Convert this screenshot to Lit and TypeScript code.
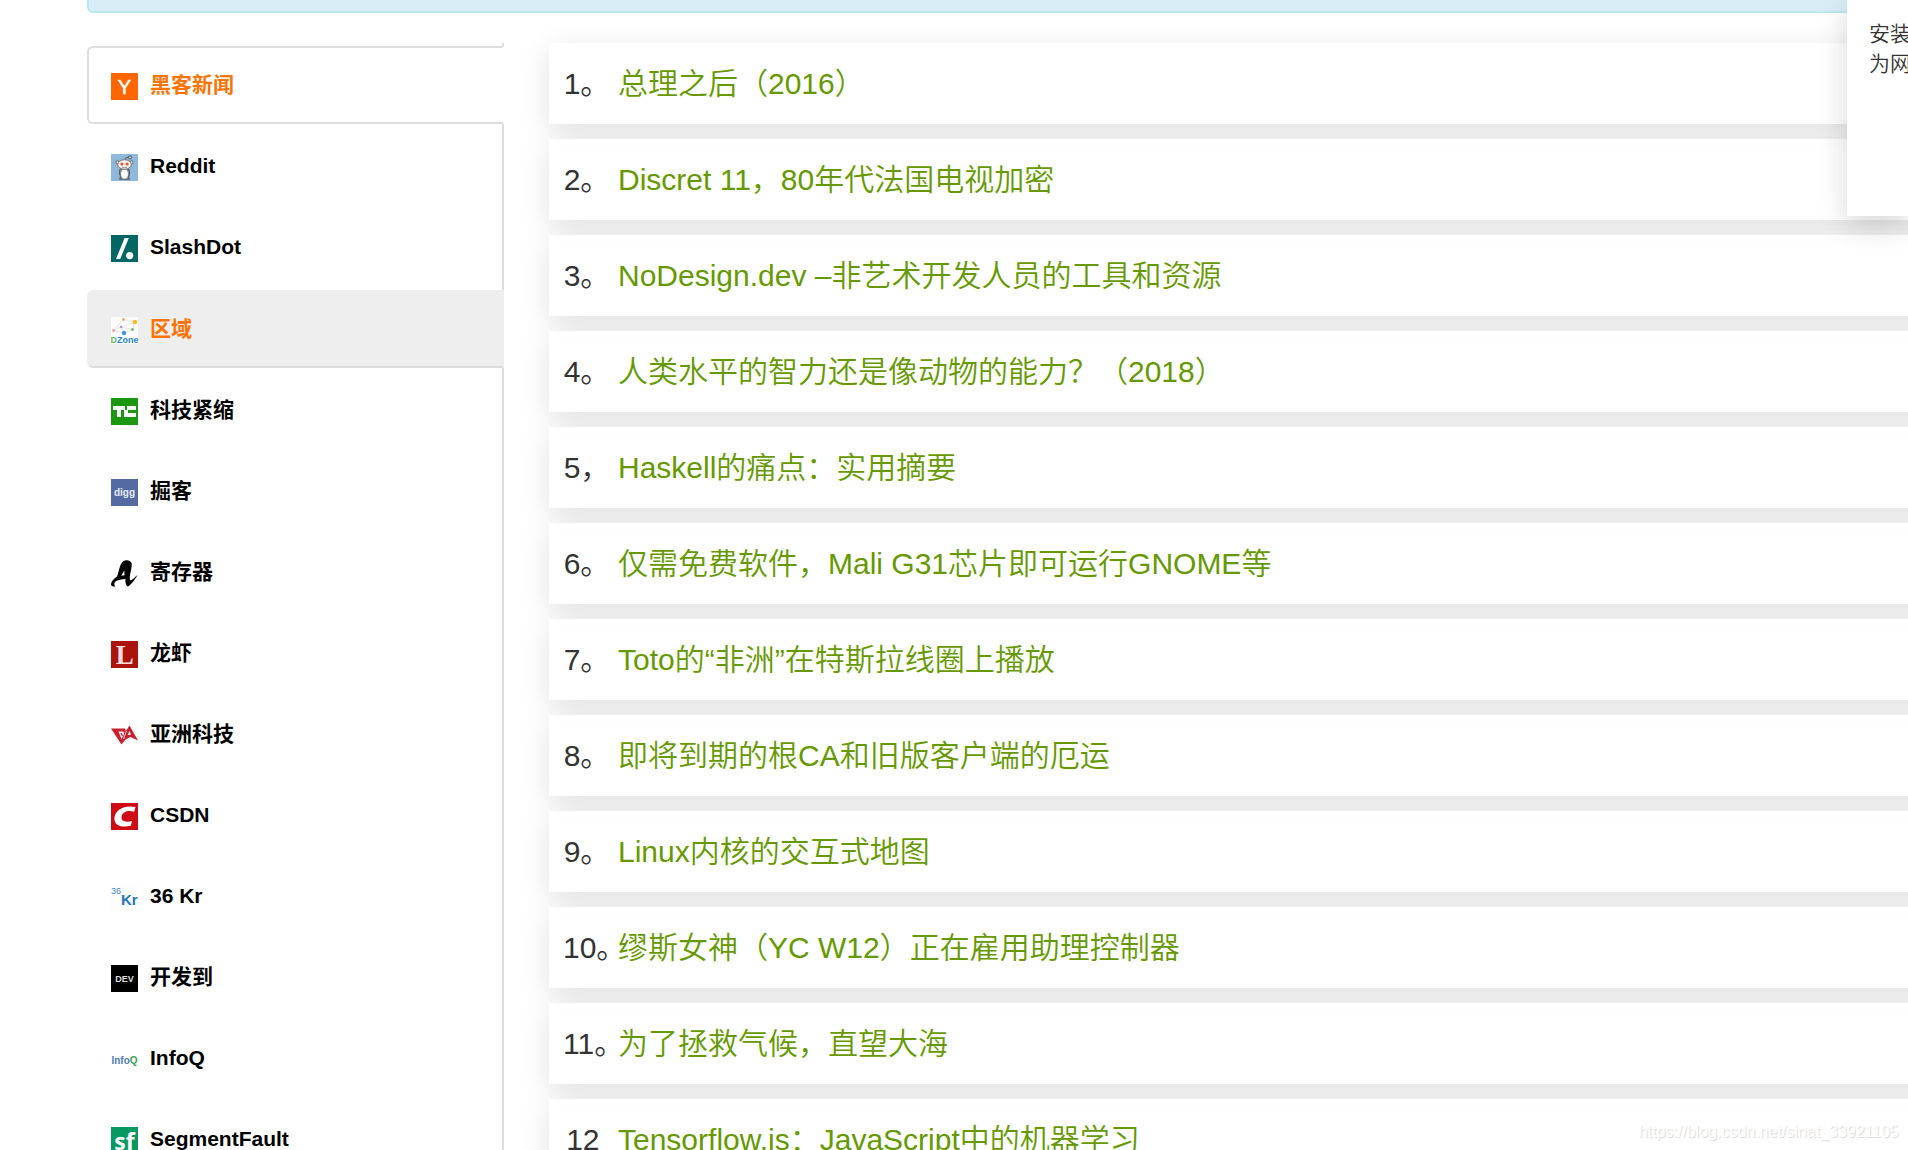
import { LitElement, html, svg, css, type SVGTemplateResult } from "lit";
import { customElement, property, state } from "lit/decorators.js";
import { classMap } from "lit/directives/class-map.js";

interface Source {
  id: string;
  name: string;
}

interface Story {
  marker: string;
  title: string;
}

const SOURCES: Source[] = [
  { id: "hn", name: "黑客新闻" },
  { id: "reddit", name: "Reddit" },
  { id: "slashdot", name: "SlashDot" },
  { id: "dzone", name: "区域" },
  { id: "techcrunch", name: "科技紧缩" },
  { id: "digg", name: "掘客" },
  { id: "alist", name: "寄存器" },
  { id: "lobsters", name: "龙虾" },
  { id: "techasia", name: "亚洲科技" },
  { id: "csdn", name: "CSDN" },
  { id: "kr36", name: "36 Kr" },
  { id: "dev", name: "开发到" },
  { id: "infoq", name: "InfoQ" },
  { id: "segmentfault", name: "SegmentFault" },
];

const STORIES: Story[] = [
  { marker: "1。", title: "总理之后（2016）" },
  { marker: "2。", title: "Discret 11，80年代法国电视加密" },
  { marker: "3。", title: "NoDesign.dev –非艺术开发人员的工具和资源" },
  { marker: "4。", title: "人类水平的智力还是像动物的能力？（2018）" },
  { marker: "5，", title: "Haskell的痛点：实用摘要" },
  { marker: "6。", title: "仅需免费软件，Mali G31芯片即可运行GNOME等" },
  { marker: "7。", title: "Toto的“非洲”在特斯拉线圈上播放" },
  { marker: "8。", title: "即将到期的根CA和旧版客户端的厄运" },
  { marker: "9。", title: "Linux内核的交互式地图" },
  { marker: "10。", title: "缪斯女神（YC W12）正在雇用助理控制器" },
  { marker: "11。", title: "为了拯救气候，直望大海" },
  { marker: "12\u00a0", title: "Tensorflow.js：JavaScript中的机器学习" },
];

const LOGOS: Record<string, SVGTemplateResult> = {
  hn: svg`
    <rect width="27" height="27" fill="#ff6600" />
    <text class="sans" x="13.5" y="21" font-size="20" text-anchor="middle" fill="#fff" stroke="#fff" stroke-width=".5">Y</text>`,
  reddit: svg`
    <rect width="27" height="27" fill="#8fb8dd" />
    <path d="M13.5 7.5 L15 3.5 L18.5 3" fill="none" stroke="#555" stroke-width="1" />
    <circle cx="19" cy="3.4" r="1.6" fill="#b9cbdc" stroke="#555" />
    <path d="M9 15 Q7.5 19 9.5 23 L8.5 25.2 H18.5 L17.5 23 Q19.5 19 18 15 Z" fill="#8a8f95" stroke="#555" />
    <ellipse cx="13.5" cy="20" rx="3.4" ry="4.7" fill="#fff" />
    <circle cx="6.6" cy="8.5" r="1.7" fill="#e9dcd6" stroke="#666" />
    <circle cx="20.4" cy="8.5" r="1.7" fill="#e9dcd6" stroke="#666" />
    <ellipse cx="13.5" cy="10.5" rx="6.8" ry="4.8" fill="#f3efec" stroke="#777" />
    <circle cx="10.8" cy="10" r="1.5" fill="#f0512e" />
    <circle cx="16.2" cy="10" r="1.5" fill="#f0512e" />
    <path d="M11 13.2 Q13.5 14.5 16 13.2" fill="none" stroke="#777" stroke-width=".8" />`,
  slashdot: svg`
    <rect width="27" height="27" fill="#026664" />
    <path d="M13.6 3 H17.8 L9.2 24 H5 Z" fill="#fff" />
    <circle cx="18.7" cy="20.6" r="3.6" fill="#fff" />`,
  dzone: svg`
    <rect width="27" height="27" fill="#fdfdfd" />
    <path d="M2.5 13.5 L12.5 2.5 L24 5 L21.5 12.5 L13 16 L10 10 L24 5 M2.5 13.5 L10 10 L21.5 12.5 M2.5 13.5 L13 16" fill="none" stroke="#ddd" stroke-width=".8" />
    <circle cx="12.5" cy="2.5" r="1.4" fill="#f5a168" />
    <circle cx="24" cy="5" r="2.2" fill="#fbbc1a" />
    <circle cx="2.5" cy="13.5" r="1.3" fill="#ee8592" />
    <circle cx="10" cy="10" r="1.2" fill="#b58acb" />
    <circle cx="21.5" cy="12.5" r="1.4" fill="#6abf58" />
    <circle cx="13" cy="16" r="2.2" fill="#3b95db" />
    <text class="sans bold" x="13.5" y="26" font-size="9" text-anchor="middle" fill="#2483ce"><tspan fill="#63bd52">D</tspan>Zone</text>`,
  techcrunch: svg`
    <rect width="27" height="27" fill="#1c9710" />
    <g fill="#fff">
      <rect x="2" y="8" width="12" height="4" />
      <rect x="6" y="8" width="4" height="11" />
      <rect x="13" y="12" width="4" height="7" />
      <rect x="16" y="8" width="9" height="4" />
      <rect x="13" y="15" width="12" height="4" />
    </g>`,
  digg: svg`
    <rect width="27" height="27" fill="#536ba2" />
    <text class="sans bold" x="13.5" y="17" font-size="10" text-anchor="middle" fill="#e8edf7">digg</text>`,
  alist: svg`
    <path d="M0 25 C0 21 3.5 18.500 6 16.500 C8 12 8.500 4 12 1.500 C14.500 -.5 19 -.5 20.500 3 C21.500 6 19 13 18.800 17 C18.700 19.500 19 20.500 20 20.200 C22 19.500 24.500 16.500 26.500 15 C24 19.500 20.500 24.500 16.800 26.600 C14.500 25 14.200 22 14.500 19 C11 19.500 6.500 19.800 4.500 21.500 C3 23 3 24.500 4.200 26.800 C2 26.500 .5 26 0 25 Z" fill="#050505" />
    <path d="M13.300 10.500 L10.300 15.800 L13.500 15.300 Z" fill="#fff" />`,
  lobsters: svg`
    <rect width="27" height="27" fill="#ac130d" />
    <text class="serif bold" x="13.8" y="23" font-size="27" text-anchor="middle" fill="#f4dfde">L</text>`,
  techasia: svg`
    <path d="M0 6.500 H14 L15 9 L18.500 3.500 L27 18.500 L19.500 15 L14.500 17.500 L10.500 22.500 Z" fill="#c8202f" />
    <path d="M7.500 9.500 H12.500 L13 12 L10.500 17 Z" fill="#fff" />
    <path d="M10 11 L11.500 14" stroke="#c8202f" stroke-width="1.200" />
    <path d="M18.300 9 L20 12.500 L16.800 13.200 Z" fill="#fff" />
    <path d="M15.500 9 L12.500 17" stroke="#fff" stroke-width=".8" />`,
  csdn: svg`
    <rect width="27" height="27" fill="#ce0a15" />
    <path d="M24.5 4 L23.2 8.8 C17 7 11.5 8.5 10.5 14 C10 18.5 15 19.5 21 18 L19.8 22.8 C10 25 2.5 22.5 3.5 14.5 C4.5 6 14 1.8 24.5 4 Z" fill="#fff" />`,
  kr36: svg`
    <rect width="27" height="27" fill="#fcfdfc" />
    <text class="sans" x="0" y="10" font-size="9" fill="#4289c8">36</text>
    <text class="sans bold" x="10" y="21" font-size="15" fill="#2577bd">Kr</text>`,
  dev: svg`
    <rect width="27" height="27" fill="#000" />
    <text class="sans bold" x="13.5" y="17" font-size="9" text-anchor="middle" fill="#ddd">DEV</text>`,
  infoq: svg`
    <text class="sans bold" x="13.5" y="18" font-size="10" text-anchor="middle" fill="#4d7dbd">Info<tspan fill="#3f9c52">Q</tspan></text>`,
  segmentfault: svg`
    <rect width="27" height="27" fill="#089963" />
    <text class="open bold" x="13.5" y="23" font-size="23" text-anchor="middle" fill="#fff">sf</text>`,
};

@customElement("source-logo")
class SourceLogo extends LitElement {
  @property() name = "";

  static styles = css`
    :host {
      display: block;
      width: 27px;
      height: 27px;
      flex: none;
    }
    .logo {
      display: block;
      width: 100%;
      height: 100%;
    }
    .sans { font-family: "Liberation Sans", Arial, sans-serif; }
    .serif { font-family: "Liberation Serif", Georgia, serif; }
    .open { font-family: "Open Sans", sans-serif; }
    .sans,
    .serif,
    .open { font-weight: 400; }
    .bold { font-weight: 700; }
  `;

  render() {
    return html`<svg class="logo" viewBox="0 0 27 27" aria-hidden="true">${LOGOS[this.name]}</svg>`;
  }
}

@customElement("source-tabs")
class SourceTabs extends LitElement {
  @property() active = "hn";
  @property() highlighted = "dzone";

  static styles = css`
    :host {
      display: block;
    }
    .tabs {
      display: flex;
      flex-direction: column;
      gap: 3px;
      height: 100%;
      box-sizing: border-box;
      padding-top: 3px;
      border-right: 2px solid #ddd;
    }
    .tab {
      display: flex;
      align-items: flex-end;
      gap: 12px;
      margin-right: -2px;
      padding: 22px;
      border: 2px solid transparent;
      border-radius: 6px 0 0 6px;
      color: #000;
      font-size: 21px;
      font-weight: 700;
      line-height: 30px;
      text-decoration: none;
      white-space: nowrap;
    }
    .active {
      background: #fff;
      border-color: #ddd #fff #ddd #ddd;
      color: #ff7300;
    }
    .highlighted,
    .tab:not(.active):hover {
      background: #eee;
      border-color: #eee #eee #ddd #eee;
      color: #ff7300;
    }
    .highlighted {
      margin-top: 1px;
    }
  `;

  private pick(event: Event, id: string) {
    event.preventDefault();
    this.dispatchEvent(new CustomEvent("source-change", { detail: id }));
  }

  render() {
    return html`
      <nav class="tabs">
        ${SOURCES.map(
          (source) => html`
            <a
              class=${classMap({
                tab: true,
                active: source.id === this.active,
                highlighted: source.id === this.highlighted && source.id !== this.active,
              })}
              href="#${source.id}"
              @click=${(event: Event) => this.pick(event, source.id)}
            >
              <source-logo name=${source.id}></source-logo>
              <span>${source.name}</span>
            </a>
          `,
        )}
      </nav>
    `;
  }
}

@customElement("story-list")
class StoryList extends LitElement {
  static styles = css`
    :host {
      display: block;
    }
    .stories {
      display: flex;
      flex-direction: column;
      gap: 15px;
      margin: 0;
      padding: 0;
      list-style: none;
    }
    .story {
      display: flex;
      gap: 7px;
      padding: 18px 14px;
      background: rgba(255, 255, 255, 0.8);
      box-shadow: 0 8px 30px rgba(0, 0, 0, 0.12);
      color: #333;
      font-size: 30px;
      line-height: 45px;
      white-space: nowrap;
    }
    .marker {
      display: flex;
      flex: none;
      justify-content: safe center;
      width: 48px;
    }
    .title {
      color: #690;
      text-decoration: none;
    }
    .title:hover {
      text-decoration: underline;
    }
  `;

  render() {
    return html`
      <ol class="stories">
        ${STORIES.map(
          (story) => html`
            <li class="story">
              <span class="marker">${story.marker}</span>
              <a class="title" href="#story">${story.title}</a>
            </li>
          `,
        )}
      </ol>
    `;
  }
}

@customElement("app-root")
class AppRoot extends LitElement {
  @state() private active = "hn";

  static styles = css`
    :host {
      display: block;
      position: relative;
      height: 100vh;
      overflow: hidden;
      background: #fff;
      color: #333;
      font-family: "Liberation Sans", Arial, "Noto Sans CJK SC", sans-serif;
      font-weight: 350;
    }
    .page {
      display: flex;
      flex-direction: column;
      gap: 30px;
      margin-right: -48px;
      padding-left: 87px;
    }
    .notice {
      padding-top: 11px;
      background: #d9edf7;
      border: 2px solid #bce8f1;
      border-top: 0;
      border-radius: 0 0 6px 6px;
    }
    .columns {
      display: flex;
      gap: 45px;
    }
    .sources {
      flex: 0 0 417px;
    }
    .feed {
      flex: 1;
      min-width: 0;
    }
    .popup {
      position: absolute;
      top: 0;
      right: 0;
      width: 39px;
      height: 197px;
      padding: 19px 0 0 22px;
      background: #fff;
      box-shadow: 0 8px 30px rgba(0, 0, 0, 0.16);
      font-size: 21px;
      line-height: 30px;
      white-space: nowrap;
    }
    .line {
      margin: 0;
    }
    .watermark {
      position: absolute;
      right: 9px;
      bottom: 8px;
      color: #fff;
      font-size: 16px;
      font-weight: 400;
      line-height: 20px;
      text-shadow: 1px 1px 1px rgba(0, 0, 0, 0.16);
    }
  `;

  render() {
    return html`
      <div class="page">
        <div class="notice" role="status"></div>
        <div class="columns">
          <source-tabs
            class="sources"
            .active=${this.active}
            @source-change=${(event: CustomEvent<string>) => (this.active = event.detail)}
          ></source-tabs>
          <main class="feed"><story-list></story-list></main>
        </div>
      </div>
      <aside class="popup">
        <p class="line">安装</p>
        <p class="line">为网</p>
      </aside>
      <div class="watermark">https://blog.csdn.net/sinat_33921105</div>
    `;
  }
}
